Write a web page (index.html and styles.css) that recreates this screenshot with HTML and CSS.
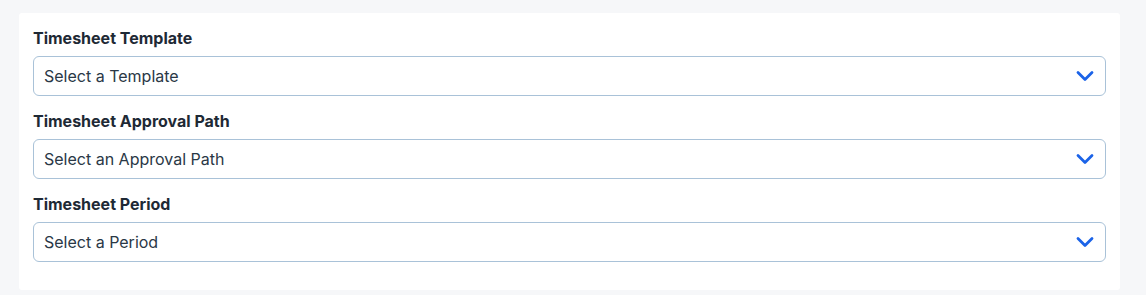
FILE: index.html
```html
<!DOCTYPE html>
<html lang="en">
<head>
    <meta charset="UTF-8">
    <meta name="viewport" content="width=device-width, initial-scale=1.0">
    <title>Timesheet Settings</title>
    <link rel="stylesheet" href="styles.css">
</head>
<body>
    <div class="card">
        <div class="field">
            <label class="field-label" for="templateSelect">Timesheet Template</label>
            <div class="select" id="templateSelect">
                <span class="select-text">Select a Template</span>
                <svg class="chevron" width="18" height="12" viewBox="0 0 18 12"><path d="M2 2.5 L9 9.5 L16 2.5" fill="none" stroke="#1b63e8" stroke-width="2.8" stroke-linecap="round" stroke-linejoin="round"/></svg>
            </div>
        </div>

        <div class="field">
            <label class="field-label" for="approvalSelect">Timesheet Approval Path</label>
            <div class="select" id="approvalSelect">
                <span class="select-text">Select an Approval Path</span>
                <svg class="chevron" width="18" height="12" viewBox="0 0 18 12"><path d="M2 2.5 L9 9.5 L16 2.5" fill="none" stroke="#1b63e8" stroke-width="2.8" stroke-linecap="round" stroke-linejoin="round"/></svg>
            </div>
        </div>

        <div class="field">
            <label class="field-label" for="periodSelect">Timesheet Period</label>
            <div class="select" id="periodSelect">
                <span class="select-text">Select a Period</span>
                <svg class="chevron" width="18" height="12" viewBox="0 0 18 12"><path d="M2 2.5 L9 9.5 L16 2.5" fill="none" stroke="#1b63e8" stroke-width="2.8" stroke-linecap="round" stroke-linejoin="round"/></svg>
            </div>
        </div>
    </div>
</body>
</html>
```

FILE: styles.css
```css
* {
    margin: 0;
    padding: 0;
    box-sizing: border-box;
}

body {
    font-family: Inter, 'Noto Sans', sans-serif;
    background: #f6f7f9;
    padding: 13px 26px 5px 19px;
}

.card {
    background: #ffffff;
    border-radius: 3px;
    padding: 15px 14px 28px 14px;
    display: flex;
    flex-direction: column;
    gap: 15px;
}

.field {
    display: flex;
    flex-direction: column;
    gap: 8px;
}

.field-label {
    font-size: 16px;
    line-height: 20px;
    font-weight: 700;
    color: #1e2935;
}

.select {
    height: 40px;
    border: 1px solid #a9c2d8;
    border-radius: 6px;
    display: flex;
    align-items: center;
    justify-content: space-between;
    padding: 0 11px 0 10px;
}

.select-text {
    font-size: 16px;
    color: #2a3846;
}

.chevron {
    display: block;
}
```
